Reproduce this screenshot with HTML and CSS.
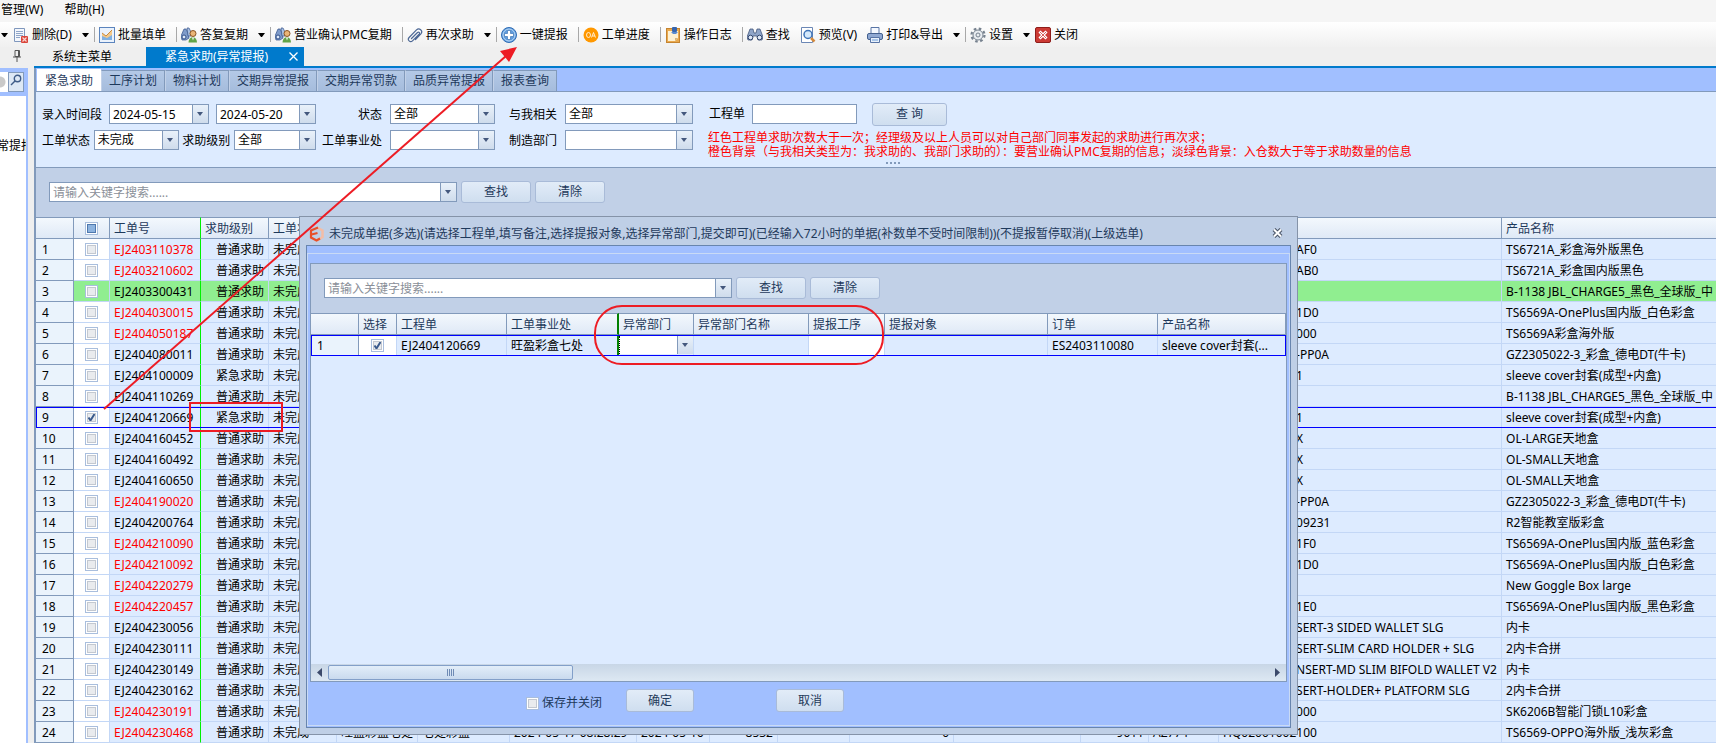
FILE: index.html
```html
<!DOCTYPE html>
<html lang="zh-CN">
  <head>
    <meta charset="UTF-8" />
    <meta name="viewport" content="width=device-width, initial-scale=1.0" />
    <title>紧急求助(异常提报)</title>
    <link rel="stylesheet" href="styles.css">
  </head>
  <body>
    <nav class="menu">
      <a href="#">管理(W)</a>
      <a href="#">帮助(H)</a>
    </nav>

    <div class="toolbar">
      <span class="caret first"></span>
      <button class="tool">
        <svg width="16" height="16" viewBox="0 0 16 16"><path d="M1.500 1.500h10v13h-10z" fill="#f4f7fc" stroke="#7f97bd"/><path d="M3 4.500h7M3 6.500h7M3 8.500h7M3 10.500h4" stroke="#8fa5c8"/><rect x="8" y="9" width="7" height="7" rx="1" fill="#d9453a"/><path d="M9.500 10.500l4 4M13.500 10.500l-4 4" stroke="#fbd5d0" stroke-width="1.200"/></svg>
        删除(D)
      </button>
      <span class="caret"></span>
      <span class="sep"></span>
      <button class="tool">
        <svg width="16" height="16" viewBox="0 0 16 16"><rect x=".5" y=".5" width="15" height="15" fill="#eaf2fc" stroke="#5b84bd"/><path d="M3 13V6l4 3 6-6v10z" fill="#f3c98b"/><path d="M3 13V9l5 2 5-3v5z" fill="#7fb0e2"/><path d="M3 6l4 3 6-6" fill="none" stroke="#c98a3c"/></svg>
        批量填单
      </button>
      <span class="sep"></span>
      <button class="tool">
        <svg width="16" height="16" viewBox="0 0 16 16"><path d="M3 2h2l2 4 1 5-3 2H1l-1-4z" fill="#7f9bc9" stroke="#34528a" stroke-width=".7"/><path d="M6 1h2l2 4v4H7z" fill="#a9c0e2" stroke="#34528a" stroke-width=".7"/><circle cx="3" cy="10" r="2" fill="#dfeafa" stroke="#34528a"/><circle cx="12" cy="6.500" r="3" fill="#eab577" stroke="#8a5424"/><path d="M7.500 15.500c0-7 8.500-7 8.500 0z" fill="#62a447"/><path d="M11 10.500h2l-1 3z" fill="#fff"/></svg>
        答复复期
      </button>
      <span class="caret"></span>
      <span class="sep"></span>
      <button class="tool">
        <svg width="16" height="16" viewBox="0 0 16 16"><path d="M3 2h2l2 4 1 5-3 2H1l-1-4z" fill="#7f9bc9" stroke="#34528a" stroke-width=".7"/><path d="M6 1h2l2 4v4H7z" fill="#a9c0e2" stroke="#34528a" stroke-width=".7"/><circle cx="3" cy="10" r="2" fill="#dfeafa" stroke="#34528a"/><circle cx="12" cy="6.500" r="3" fill="#eab577" stroke="#8a5424"/><path d="M7.500 15.500c0-7 8.500-7 8.500 0z" fill="#62a447"/><path d="M11 10.500h2l-1 3z" fill="#fff"/></svg>
        营业确认PMC复期
      </button>
      <span class="sep"></span>
      <button class="tool">
        <svg width="16" height="16" viewBox="0 0 16 16" fill="none" stroke="#4d6895" stroke-width="1.200" stroke-linecap="round"><path d="M4.500 11.500l6-6c1.200-1.200 2.800.300 1.600 1.600l-6.600 6.700c-2.300 2.300-5.600-.900-3.400-3.300l7.400-7.600c2.700-2.700 6.900 1 4.400 3.900l-5.400 5.700"/></svg>
        再次求助
      </button>
      <span class="caret"></span>
      <span class="sep"></span>
      <button class="tool">
        <svg width="16" height="16" viewBox="0 0 16 16"><circle cx="8" cy="8" r="7.500" fill="#5f9bdc" stroke="#2f6cb4"/><circle cx="8" cy="8" r="6" fill="none" stroke="#b9d8f5"/><path d="M6.500 3.500h3v3h3v3h-3v3h-3v-3h-3v-3h3z" fill="#fff" stroke="#3e76b5" stroke-width=".7"/></svg>
        一键提报
      </button>
      <span class="sep"></span>
      <button class="tool">
        <svg width="16" height="16" viewBox="0 0 16 16"><circle cx="8" cy="8" r="7.500" fill="#ff9800"/><ellipse cx="5.500" cy="8" rx="2" ry="2.500" fill="none" stroke="#fff" stroke-width=".8"/><path d="M8.500 10.500l2-5 2 5M9.300 9h2.500" fill="none" stroke="#fff" stroke-width=".8"/></svg>
        工单进度
      </button>
      <span class="sep"></span>
      <button class="tool">
        <svg width="16" height="16" viewBox="0 0 16 16"><rect x="1.500" y="1.500" width="13" height="14" fill="#e9a94e" stroke="#c58430"/><path d="M3 4h10v7l-3 3H3z" fill="#fdf0d2"/><path d="M13 11h-3v3z" fill="#d9b478"/><rect x="7" y="0" width="5" height="5" rx="1" fill="#3765ad"/><path d="M6 5h7l-2 2H8z" fill="#5a8ad0"/></svg>
        操作日志
      </button>
      <span class="sep"></span>
      <button class="tool">
        <svg width="16" height="16" viewBox="0 0 16 16"><path d="M3 2h3l1 4h2l1-4h3l3 8-1 3h-4l-1-4H6l-1 4H1l-1-3z" fill="#8fa5c9" stroke="#34486e" stroke-width=".7"/><circle cx="3.500" cy="10.500" r="2.300" fill="#dfe9f8" stroke="#34486e"/><circle cx="12.500" cy="10.500" r="2.300" fill="#dfe9f8" stroke="#34486e"/></svg>
        查找
      </button>
      <button class="tool">
        <svg width="16" height="16" viewBox="0 0 16 16"><path d="M1.500.500h11v15h-11z" fill="#fff" stroke="#6b87b5"/><circle cx="8" cy="7.500" r="4" fill="#d4e8fb" stroke="#3f74b8" stroke-width="1.500"/><path d="M11 11l3.500 3.500" stroke="#d58a3c" stroke-width="2.500"/></svg>
        预览(V)
      </button>
      <button class="tool">
        <svg width="16" height="16" viewBox="0 0 16 16"><path d="M4 .5h8v7H4z" fill="#f4f8ff" stroke="#5874a5"/><rect x=".5" y="6.500" width="15" height="6" rx="1.500" fill="#8fa8d2" stroke="#44608f"/><path d="M3.500 10.500h9v5h-9z" fill="#e7f0fb" stroke="#5874a5"/><path d="M5 13h6" stroke="#6b9bd8"/></svg>
        打印&amp;导出
      </button>
      <span class="caret"></span>
      <span class="sep"></span>
      <button class="tool">
        <svg width="16" height="16" viewBox="0 0 16 16" fill="none" stroke="#77828f"><circle cx="8" cy="8" r="6.500" stroke-width="2.200" stroke-dasharray="2.600 2.500"/><circle cx="8" cy="8" r="5" fill="#e8ecf0"/><circle cx="8" cy="8" r="2"/></svg>
        设置
      </button>
      <span class="caret"></span>
      <button class="tool">
        <svg width="16" height="16" viewBox="0 0 16 16"><rect x=".5" y=".5" width="15" height="15" rx="1.500" fill="#cc3a34" stroke="#8e1d1a"/><path d="M4.500 4.500l7 7M11.500 4.500l-7 7" stroke="#fff" stroke-width="3"/><path d="M5 5l6 6M11 5l-6 6" stroke="#d9605a"/></svg>
        关闭
      </button>
    </div>

    <div class="doc-tabs">
      <span class="pin">
        <svg width="8" height="12" viewBox="0 0 8 12" fill="none" stroke="#555"><path d="M2 .5h4.500v6H2zM5.500 1v5M0 7h8M4 7v5"/></svg>
      </span>
      <div class="tab-list">
        <a class="doc-tab" href="#">系统主菜单</a>
        <a class="doc-tab current" href="#">紧急求助(异常提报)
          <svg width="9" height="9" viewBox="0 0 9 9" stroke="#fff" stroke-width="1.300"><path d="M.5.500l8 8M8.500.500l-8 8"/></svg>
        </a>
      </div>
    </div>

    <div class="workspace">
      <aside class="side">
        <div class="side-search">
          <span class="side-clear"></span>
          <button class="side-btn" aria-label="查找">
            <svg width="12" height="12" viewBox="0 0 12 12" fill="none" stroke="#3f5c88" stroke-width="1.400"><circle cx="7.500" cy="4.500" r="3.200"/><path d="M5 7L1 11"/></svg>
          </button>
        </div>
        <div class="side-tree"><a href="#">常提报</a></div>
      </aside>

      <main class="main">
        <div class="sub-tabs">
          <button class="sub-tab active">紧急求助</button>
          <button class="sub-tab">工序计划</button>
          <button class="sub-tab">物料计划</button>
          <button class="sub-tab">交期异常提报</button>
          <button class="sub-tab">交期异常罚款</button>
          <button class="sub-tab">品质异常提报</button>
          <button class="sub-tab">报表查询</button>
        </div>

        <form class="filters">
          <div class="filter-grid">
            <div class="field-group">
              <label for="date-from">录入时间段</label>
              <input class="box drop date" id="date-from" type="text" value="2024-05-15">
              <input class="box drop date" type="text" value="2024-05-20" aria-label="结束日期">
            </div>
            <label class="right" for="status">状态</label>
            <select class="box drop" id="status"><option>全部</option></select>
            <label class="right" for="related">与我相关</label>
            <select class="box drop" id="related"><option>全部</option></select>
            <div class="query">
              <label for="project">工程单</label>
              <input class="box" id="project" type="text">
              <button class="btn" type="button">查 询</button>
            </div>

            <div class="field-group">
              <label for="order-status">工单状态</label>
              <select class="box drop order-status" id="order-status"><option>未完成</option></select>
              <label for="level">求助级别</label>
              <select class="box drop level" id="level"><option>全部</option></select>
            </div>
            <label class="right" for="division">工单事业处</label>
            <select class="box drop" id="division"><option></option></select>
            <label class="right" for="dept">制造部门</label>
            <select class="box drop" id="dept"><option></option></select>
            <p class="note">红色工程单求助次数大于一次；经理级及以上人员可以对自己部门同事发起的求助进行再次求；<br>橙色背景（与我相关类型为：我求助的、我部门求助的）：要营业确认PMC复期的信息；淡绿色背景：入仓数大于等于求助数量的信息</p>
          </div>
          <div class="splitter"><i></i><i></i><i></i><i></i></div>
        </form>

        <div class="search-bar">
          <input class="box drop keyword" type="text" placeholder="请输入关键字搜索......" aria-label="关键字">
          <button class="btn">查找</button>
          <button class="btn">清除</button>
        </div>

        <table class="grid orders">
          <colgroup>
            <col class="w-no"><col class="w-check"><col class="w-order"><col class="w-level"><col class="w-status">
            <col class="w-div"><col class="w-dept"><col class="w-time"><col class="w-date"><col class="w-qty">
            <col class="w-blank"><col class="w-num"><col class="w-wide"><col class="w-amount"><col class="w-code">
            <col class="w-part"><col>
          </colgroup>
          <thead>
            <tr>
              <th></th>
              <th class="check"><input class="some" type="checkbox" aria-label="全选"></th>
              <th class="fixed">工单号</th>
              <th>求助级别</th>
              <th>工单状态</th>
              <th colspan="10"></th>
              <th></th>
              <th>产品名称</th>
            </tr>
          </thead>
          <tbody>
            <tr><th>1</th><td class="check"><input type="checkbox" aria-label="1"></td><td class="fixed red">EJ2403110378</td><td class="num">普通求助</td><td>未完成</td><td colspan="10"></td><td class="part">AF0</td><td>TS6721A_彩盒海外版黑色</td></tr>
            <tr><th>2</th><td class="check"><input type="checkbox" aria-label="2"></td><td class="fixed red">EJ2403210602</td><td class="num">普通求助</td><td>未完成</td><td colspan="10"></td><td class="part">AB0</td><td>TS6721A_彩盒国内版黑色</td></tr>
            <tr class="stocked"><th>3</th><td class="check"><input type="checkbox" aria-label="3"></td><td class="fixed">EJ2403300431</td><td class="num">普通求助</td><td>未完成</td><td colspan="10"></td><td class="part"></td><td>B-1138 JBL_CHARGE5_黑色_全球版_中</td></tr>
            <tr><th>4</th><td class="check"><input type="checkbox" aria-label="4"></td><td class="fixed red">EJ2404030015</td><td class="num">普通求助</td><td>未完成</td><td colspan="10"></td><td class="part">1D0</td><td>TS6569A-OnePlus国内版_白色彩盒</td></tr>
            <tr><th>5</th><td class="check"><input type="checkbox" aria-label="5"></td><td class="fixed red">EJ2404050187</td><td class="num">普通求助</td><td>未完成</td><td colspan="10"></td><td class="part">000</td><td>TS6569A彩盒海外版</td></tr>
            <tr><th>6</th><td class="check"><input type="checkbox" aria-label="6"></td><td class="fixed">EJ2404080011</td><td class="num">普通求助</td><td>未完成</td><td colspan="10"></td><td class="part">-PP0A</td><td>GZ2305022-3_彩盒_德电DT(牛卡)</td></tr>
            <tr><th>7</th><td class="check"><input type="checkbox" aria-label="7"></td><td class="fixed">EJ2404100009</td><td class="num">紧急求助</td><td>未完成</td><td colspan="10"></td><td class="part">1</td><td>sleeve cover封套(成型+内盒)</td></tr>
            <tr><th>8</th><td class="check"><input type="checkbox" aria-label="8"></td><td class="fixed">EJ2404110269</td><td class="num">普通求助</td><td>未完成</td><td colspan="10"></td><td class="part"></td><td>B-1138 JBL_CHARGE5_黑色_全球版_中</td></tr>
            <tr class="focused"><th>9</th><td class="check"><input type="checkbox" checked aria-label="9"></td><td class="fixed">EJ2404120669</td><td class="num">紧急求助</td><td>未完成</td><td colspan="10"></td><td class="part">1</td><td>sleeve cover封套(成型+内盒)</td></tr>
            <tr><th>10</th><td class="check"><input type="checkbox" aria-label="10"></td><td class="fixed">EJ2404160452</td><td class="num">普通求助</td><td>未完成</td><td colspan="10"></td><td class="part">X</td><td>OL-LARGE天地盒</td></tr>
            <tr><th>11</th><td class="check"><input type="checkbox" aria-label="11"></td><td class="fixed">EJ2404160492</td><td class="num">普通求助</td><td>未完成</td><td colspan="10"></td><td class="part">X</td><td>OL-SMALL天地盒</td></tr>
            <tr><th>12</th><td class="check"><input type="checkbox" aria-label="12"></td><td class="fixed">EJ2404160650</td><td class="num">普通求助</td><td>未完成</td><td colspan="10"></td><td class="part">X</td><td>OL-SMALL天地盒</td></tr>
            <tr><th>13</th><td class="check"><input type="checkbox" aria-label="13"></td><td class="fixed red">EJ2404190020</td><td class="num">普通求助</td><td>未完成</td><td colspan="10"></td><td class="part">-PP0A</td><td>GZ2305022-3_彩盒_德电DT(牛卡)</td></tr>
            <tr><th>14</th><td class="check"><input type="checkbox" aria-label="14"></td><td class="fixed">EJ2404200764</td><td class="num">普通求助</td><td>未完成</td><td colspan="10"></td><td class="part">09231</td><td>R2智能教室版彩盒</td></tr>
            <tr><th>15</th><td class="check"><input type="checkbox" aria-label="15"></td><td class="fixed red">EJ2404210090</td><td class="num">普通求助</td><td>未完成</td><td colspan="10"></td><td class="part">1F0</td><td>TS6569A-OnePlus国内版_蓝色彩盒</td></tr>
            <tr><th>16</th><td class="check"><input type="checkbox" aria-label="16"></td><td class="fixed red">EJ2404210092</td><td class="num">普通求助</td><td>未完成</td><td colspan="10"></td><td class="part">1D0</td><td>TS6569A-OnePlus国内版_白色彩盒</td></tr>
            <tr><th>17</th><td class="check"><input type="checkbox" aria-label="17"></td><td class="fixed red">EJ2404220279</td><td class="num">普通求助</td><td>未完成</td><td colspan="10"></td><td class="part"></td><td>New Goggle Box large</td></tr>
            <tr><th>18</th><td class="check"><input type="checkbox" aria-label="18"></td><td class="fixed red">EJ2404220457</td><td class="num">普通求助</td><td>未完成</td><td colspan="10"></td><td class="part">1E0</td><td>TS6569A-OnePlus国内版_黑色彩盒</td></tr>
            <tr><th>19</th><td class="check"><input type="checkbox" aria-label="19"></td><td class="fixed">EJ2404230056</td><td class="num">普通求助</td><td>未完成</td><td colspan="10"></td><td class="part">SERT-3 SIDED WALLET SLG</td><td>内卡</td></tr>
            <tr><th>20</th><td class="check"><input type="checkbox" aria-label="20"></td><td class="fixed">EJ2404230111</td><td class="num">普通求助</td><td>未完成</td><td colspan="10"></td><td class="part">SERT-SLIM CARD HOLDER + SLG</td><td>2内卡合拼</td></tr>
            <tr><th>21</th><td class="check"><input type="checkbox" aria-label="21"></td><td class="fixed">EJ2404230149</td><td class="num">普通求助</td><td>未完成</td><td colspan="10"></td><td class="part">NSERT-MD SLIM BIFOLD WALLET V2</td><td>内卡</td></tr>
            <tr><th>22</th><td class="check"><input type="checkbox" aria-label="22"></td><td class="fixed">EJ2404230162</td><td class="num">普通求助</td><td>未完成</td><td colspan="10"></td><td class="part">SERT-HOLDER+ PLATFORM SLG</td><td>2内卡合拼</td></tr>
            <tr><th>23</th><td class="check"><input type="checkbox" aria-label="23"></td><td class="fixed red">EJ2404230191</td><td class="num">普通求助</td><td>未完成</td><td colspan="10"></td><td class="part">000</td><td>SK6206B智能门锁L10彩盒</td></tr>
            <tr><th>24</th><td class="check"><input type="checkbox" aria-label="24"></td><td class="fixed red">EJ2404230468</td><td class="num">普通求助</td><td>未完成</td><td>旺盈彩盒七处</td><td>七处彩盒</td><td>2024-05-17 08:28:29</td><td>2024-05-16</td><td class="num">8532</td><td></td><td class="num">0</td><td></td><td class="num">9011</td><td>AZ774</td><td>HQ02001002100</td><td>TS6569-OPPO海外版_浅灰彩盒</td></tr>
          </tbody>
        </table>
      </main>
    </div>

    <section class="dialog" role="dialog" aria-labelledby="dialog-title">
      <header class="dialog-head">
        <svg width="15" height="16" viewBox="0 0 15 16" fill="none"><path d="M8 1.500l5.500 3v6.500L8 14.500" stroke="#f3bda6" stroke-width="2.500"/><path d="M9 1.500L2 4.500v7l5.500 3 3.500-2M2.500 8.500l6-1.500" stroke="#e8502a" stroke-width="2.200"/></svg>
        <h1 id="dialog-title">未完成单据(多选)(请选择工程单,填写备注,选择提报对象,选择异常部门,提交即可)(已经输入72小时的单据(补数单不受时间限制))(不提报暂停取消)(上级选单)</h1>
        <button class="close" aria-label="关闭">
          <svg width="11" height="10" viewBox="0 0 11 10"><path d="M2 1.500l7 7M9 1.500l-7 7" stroke="#4a5568" stroke-width="4"/><path d="M2 1.500l7 7M9 1.500l-7 7" stroke="#fff" stroke-width="2"/></svg>
        </button>
      </header>
      <div class="dialog-body">
        <div class="dialog-inner">
          <div class="panel">
            <div class="search-bar">
              <input class="box drop keyword" type="text" placeholder="请输入关键字搜索......" aria-label="关键字">
              <button class="btn">查找</button>
              <button class="btn">清除</button>
            </div>
            <div class="panel-rows">
              <table class="grid picks">
                <colgroup>
                  <col class="p-no"><col class="p-check"><col class="p-order"><col class="p-div"><col class="p-dept">
                  <col class="p-name"><col class="p-step"><col class="p-target"><col class="p-order"><col>
                </colgroup>
                <thead>
                  <tr><th></th><th>选择</th><th>工程单</th><th class="fixed">工单事业处</th><th>异常部门</th><th>异常部门名称</th><th>提报工序</th><th>提报对象</th><th>订单</th><th>产品名称</th></tr>
                </thead>
                <tbody>
                  <tr class="focused">
                    <th>1</th>
                    <td class="check"><input type="checkbox" checked aria-label="选择"></td>
                    <td>EJ2404120669</td>
                    <td class="fixed">旺盈彩盒七处</td>
                    <td class="edit"><select class="drop" aria-label="异常部门"><option></option></select></td>
                    <td></td>
                    <td class="blank"></td>
                    <td></td>
                    <td>ES2403110080</td>
                    <td>sleeve cover封套(...</td>
                  </tr>
                </tbody>
              </table>
            </div>
            <div class="scroll">
              <svg class="arrow" width="17" height="17" viewBox="0 0 17 17"><path d="M11 4v9L6 8.500z" fill="#3c4a6b"/></svg>
              <div class="thumb"><i></i><i></i><i></i><i></i></div>
              <svg class="arrow end" width="17" height="17" viewBox="0 0 17 17"><path d="M6 4v9l5-4.500z" fill="#3c4a6b"/></svg>
            </div>
          </div>
          <footer class="dialog-foot">
            <label class="keep"><input type="checkbox">保存并关闭</label>
            <button class="btn">确定</button>
            <button class="btn cancel">取消</button>
          </footer>
        </div>
      </div>
    </section>

    <svg class="marks" width="900" height="440" viewBox="0 0 900 440" fill="none" stroke="#ed1c24" stroke-width="2">
      <path d="M104 409L506 56"/>
      <path d="M517 47l-17 4 9 11z" fill="#ed1c24" stroke="none"/>
      <path d="M190 403h92v28h-92z"/>
      <rect x="595" y="306" width="288" height="58" rx="27"/>
    </svg>
  </body>
</html>
```

FILE: styles.css
```css
* {
  margin: 0;
  padding: 0;
  box-sizing: border-box;
}
body {
  position: relative;
  min-height: 100vh;
  overflow: hidden;
  background-color: #efefef;
  color: #000;
}
body,
button,
input,
select {
  font-family: "Noto Sans", "Noto Sans CJK SC", sans-serif;
  font-size: 12px;
  line-height: 16px;
}
a {
  color: inherit;
  text-decoration: none;
}
svg {
  flex: none;
}

/* menu and toolbar */
.menu {
  display: flex;
  gap: 21px;
  height: 22px;
  padding: 2px 1px;
  background-color: #f5f5f5;
}
.toolbar {
  display: flex;
  align-items: center;
  height: 25px;
  background: linear-gradient(#fff, #f0f0f0);
  white-space: nowrap;
}
.tool {
  display: flex;
  align-items: center;
  gap: 3px;
  margin-right: 10px;
  border: none;
  background: none;
}
.caret {
  width: 7px;
  margin-right: 5px;
  border: 3px solid transparent;
  border-top: 4px solid #000;
  border-bottom: none;
}
.caret.first {
  margin-left: 1px;
}
.sep {
  width: 1px;
  height: 15px;
  margin-right: 4px;
  background-color: #a8a8a8;
}

/* document tabs */
.doc-tabs {
  display: flex;
  height: 21px;
}
.pin {
  width: 34px;
  padding: 3px 0 0 13px;
}
.tab-list {
  display: flex;
  flex: 1;
  border-bottom: 2px solid #007acc;
}
.doc-tab {
  width: 112px;
  padding: 2px 18px;
}
.doc-tab.current {
  display: flex;
  align-items: center;
  justify-content: space-between;
  width: 158px;
  padding: 0 6px 0 19px;
  background-color: #007acc;
  color: #fff;
}

/* left panel */
.workspace {
  display: flex;
}
.side {
  flex: none;
  width: 28px;
  margin-right: 6px;
  border-right: 2px solid #a1bfff;
  background-color: #fff;
  overflow: hidden;
}
.side-search {
  display: flex;
  height: 28px;
  padding: 4px 2px 4px 0;
  background-color: #a1bfff;
}
.side-clear {
  width: 8px;
  background: radial-gradient(circle at 0 50%, #c9c9c9 5px, #fff 6px);
}
.side-btn {
  width: 16px;
  border: 1px solid #829abb;
  background-color: #dde8f5;
}
.side-tree {
  margin: 42px 0 0 -3px;
  white-space: nowrap;
}

/* main area */
.main {
  flex: 1;
  min-width: 0;
  border-left: 2px solid #829abb;
  overflow: hidden;
}
.sub-tabs {
  display: flex;
  align-items: flex-end;
  height: 24px;
  padding-left: 1px;
  border-bottom: 1px solid #829abb;
  background-color: #a1bfff;
}
.sub-tab {
  height: 21px;
  padding: 0 7px;
  border: 1px solid #829abb;
  border-bottom: none;
  border-left-color: #c2d1e8;
  background: linear-gradient(#b4c9e6, #a5bcdc);
  color: #1e395b;
}
.sub-tab.active {
  height: 22px;
  border-color: #fff;
  background: #fff;
}
.filters {
  padding: 12px 0 0 6px;
  border-bottom: 1px solid #829abb;
  background-color: #ddebff;
}
.filter-grid {
  display: grid;
  grid-template-columns: 274px 74px 105px 70px 128px 1fr;
  grid-template-rows: 20px 29px;
  row-gap: 6px;
  white-space: nowrap;
}
.filter-grid label {
  line-height: 22px;
}
.right {
  padding-right: 8px;
  text-align: right;
}
.field-group {
  display: flex;
  justify-content: space-between;
  height: 20px;
}
.query {
  display: flex;
  align-items: center;
  padding-left: 16px;
}
.query .box {
  width: 105px;
  margin: 0 15px 0 7px;
}
.box {
  height: 20px;
  padding: 0 3px;
  border: 1px solid #829abb;
  border-radius: 0;
  background-color: #fff;
  color: #000;
  appearance: none;
}
.drop {
  background-image: url("data:image/svg+xml,%3Csvg xmlns='http://www.w3.org/2000/svg' width='16' height='20'%3E%3Cpath d='M5 7h6l-3 4z' fill='%2344587d'/%3E%3Cpath d='M.5 0v20' stroke='%23829abb'/%3E%3C/svg%3E"), linear-gradient(#e9f1fa, #cfdcec);
  background-position: right top, right top;
  background-repeat: no-repeat;
  background-size: 16px 20px, 16px 100%;
}
.box::placeholder {
  color: #8a8f98;
}
.date {
  width: 100px;
}
.order-status {
  width: 85px;
}
.level {
  width: 82px;
}
.note {
  padding: 1px 0 0 15px;
  color: #f00;
  line-height: 14px;
}
.splitter {
  display: flex;
  gap: 2px;
  justify-content: center;
  height: 8px;
  padding: 3px 0 0 28px;
}
.splitter i {
  width: 2px;
  height: 2px;
  background-color: #829abb;
}
.search-bar {
  display: flex;
  align-items: center;
  gap: 4px;
  padding: 13px 13px 14px;
  background-color: #c1d0e7;
}
.keyword {
  width: 408px;
}
.btn {
  width: 70px;
  height: 22px;
  border: 1px solid #a9bbd8;
  border-radius: 3px;
  background: linear-gradient(#e2ecf8, #cfdeef);
  color: #1e395b;
}
.query .btn {
  width: 75px;
  height: 23px;
}

/* data grids */
.grid {
  width: 100%;
  table-layout: fixed;
  border-collapse: separate;
  border-spacing: 0;
}
.grid th,
.grid td {
  height: 21px;
  padding: 2px 4px 0;
  overflow: hidden;
  white-space: nowrap;
  text-align: left;
  font-weight: normal;
}
.grid thead th {
  height: 22px;
  border: 1px solid #829abb;
  border-left: none;
  background: linear-gradient(#f3f8fd, #dfe9f6);
  color: #1e395b;
}
.grid td {
  border-right: 1px solid #c3d7f6;
  border-bottom: 1px solid #c3d7f6;
  background-color: #ddebff;
}
.grid tbody th {
  padding-left: 6px;
  border-right: 1px solid #829abb;
  border-bottom: 1px solid #829abb;
  background-color: #eaf3fc;
}
.grid .check {
  padding: 0;
  line-height: 14px;
  text-align: center;
}
.grid td.check,
.grid td.blank {
  background-color: #fff;
}
.orders {
  min-width: 1900px;
}
.orders .fixed {
  border-right-color: #00f000;
}
.grid .num {
  text-align: right;
}
.grid .red {
  color: #f00;
}
/* only the tail of the code shows beside the dialog */
.grid .part {
  padding-left: 77px;
}
.grid .stocked td {
  background-color: #90ee90;
}
.grid .focused {
  outline: 1px solid #00f;
  outline-offset: -1px;
}
.w-no { width: 38px; }
.w-check { width: 36px; }
.w-order { width: 91px; }
.w-level { width: 68px; }
.w-status { width: 68px; }
.w-div { width: 81px; }
.w-dept { width: 92px; }
.w-time { width: 127px; }
.w-date { width: 73px; }
.w-qty { width: 68px; }
.w-blank { width: 72px; }
.w-num { width: 104px; }
.w-wide { width: 127px; }
.w-amount { width: 68px; }
.w-code { width: 70px; }
.w-part { width: 283px; }

input[type="checkbox"] {
  width: 13px;
  height: 13px;
  border: 1px solid #a9bedd;
  background: #e9ebee no-repeat center;
  box-shadow: inset 0 0 0 1px #fff, inset 0 0 0 2px #c3c8d0;
  vertical-align: middle;
  appearance: none;
}
input[type="checkbox"]:checked {
  background-image: url("data:image/svg+xml,%3Csvg xmlns='http://www.w3.org/2000/svg' width='11' height='11'%3E%3Cpath d='M2.500 5.500l2 3 4-6.500' fill='none' stroke='%233a5a8c' stroke-width='2'/%3E%3C/svg%3E");
}
input[type="checkbox"].some {
  background-color: #8db3df;
  box-shadow: inset 0 0 0 1px #fff, inset 0 0 0 2px #4f78ad;
}

/* dialog window */
.dialog {
  position: absolute;
  top: 216px;
  left: 299px;
  width: 999px;
  padding: 0 6px 6px;
  border: 1px solid #8593a8;
  background-color: #bfcfe6;
  color: #1e395b;
}
.dialog-head {
  display: flex;
  align-items: center;
  height: 28px;
  padding: 6px 8px 0 3px;
}
.dialog-head h1 {
  flex: 1;
  padding-left: 5px;
  font-size: 12px;
  font-weight: normal;
  white-space: nowrap;
}
.close {
  border: none;
  background: none;
}
.dialog-body {
  padding: 7px 0 1px;
  border: 1px solid #6885ae;
  background-color: #a1bfff;
}
.dialog-inner {
  padding: 9px 2px 0;
  border: 1px solid #c9daf5;
}
.panel {
  border: 1px solid #829abb;
}
.panel-rows {
  height: 351px;
  background-color: #ddebff;
  color: #000;
}
.picks .fixed {
  border-right: 2px solid #008000;
}
.grid .edit {
  padding: 0;
}
.edit select {
  display: block;
  width: 100%;
  height: 18px;
  border: none;
  border-left: 1px dotted #000;
  border-radius: 0;
  background-color: #fff;
  appearance: none;
}
.p-no { width: 48px; }
.p-check { width: 38px; }
.p-order { width: 110px; }
.p-div { width: 112px; }
.p-dept { width: 75px; }
.p-name { width: 115px; }
.p-step { width: 76px; }
.p-target { width: 163px; }
.scroll {
  display: flex;
  align-items: center;
  height: 17px;
  background: linear-gradient(#c8d6e6, #dde8f3);
}
.thumb {
  display: flex;
  align-items: center;
  justify-content: center;
  gap: 1px;
  width: 245px;
  height: 15px;
  border: 1px solid #829fc9;
  border-radius: 2px;
  background: linear-gradient(#e2edf9, #c9daee);
}
.thumb i {
  width: 1px;
  height: 7px;
  background-color: #6f8bb5;
}
.arrow.end {
  margin-left: auto;
}
.dialog-foot {
  display: flex;
  height: 43px;
  padding: 7px 0 0 216px;
}
.keep {
  display: flex;
  align-items: center;
  gap: 3px;
  height: 28px;
  margin-right: 24px;
}
.dialog-foot .btn {
  width: 68px;
  height: 23px;
}
.dialog-foot .cancel {
  margin-left: 82px;
}

/* red pen marks over the window */
.marks {
  position: absolute;
  top: 0;
  left: 0;
  pointer-events: none;
}
```
